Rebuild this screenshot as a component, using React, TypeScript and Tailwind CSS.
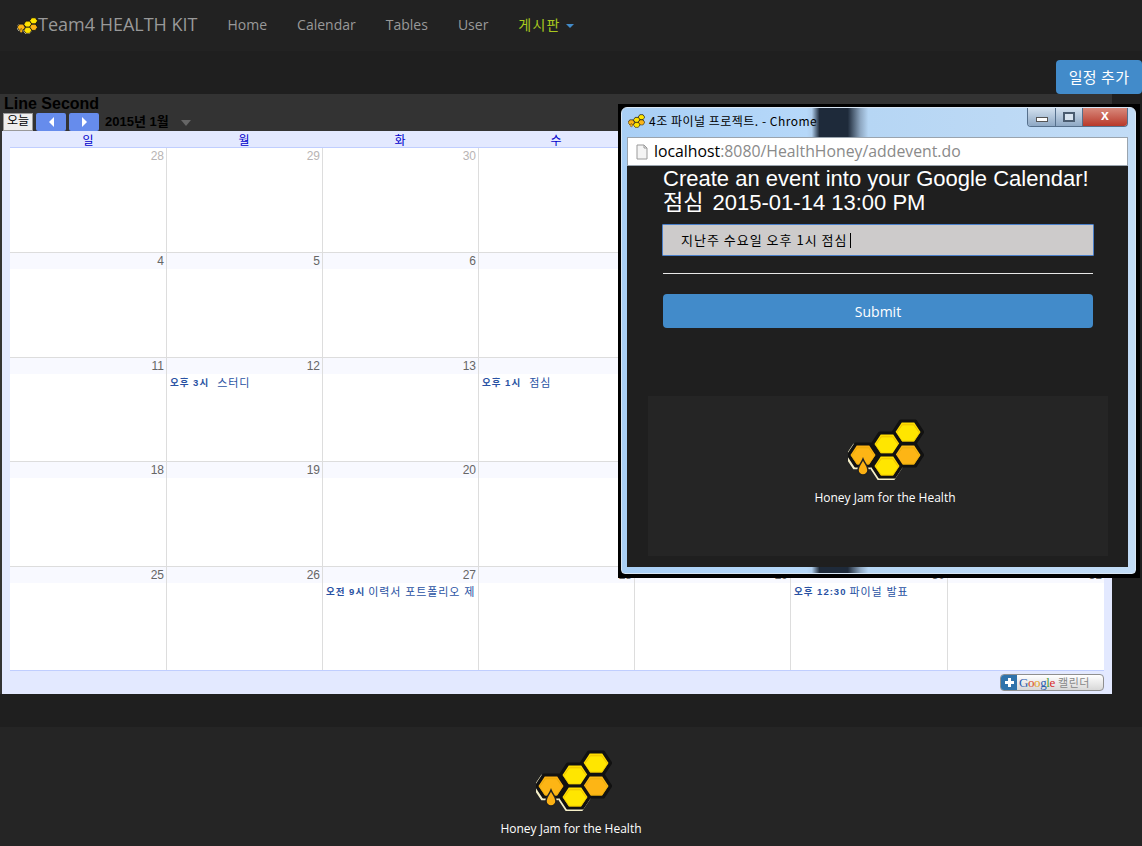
import React from 'react';

const open = { fontFamily: '"Open Sans", "Noto Sans CJK KR", sans-serif' };
const arial = { fontFamily: '"Liberation Sans", "Noto Sans CJK KR", Arial, sans-serif' };
const korean = { fontFamily: '"Noto Sans CJK KR", "Liberation Sans", sans-serif' };

// Honeycomb logo, cell centers measured from the reference
const cells = [
  { x: 60, y: 14, fill: '#ffdd00' },
  { x: 39, y: 26, fill: '#ffdd00' },
  { x: 60, y: 37, fill: '#fbb817' },
  { x: 15, y: 37, fill: '#fbb013' },
  { x: 39, y: 48, fill: '#ffdd00' },
];

const hex = (cx: number, cy: number, w = 14.5, h = 11) =>
  `${cx - w},${cy} ${cx - w / 2},${cy - h} ${cx + w / 2},${cy - h} ${cx + w},${cy} ${cx + w / 2},${cy + h} ${cx - w / 2},${cy + h}`;

const HoneyLogo = ({ className }: { className?: string }) => (
  <svg viewBox="0 0 76 62" className={className}>
    <polygon points={hex(13.5, 38.5)} fill="#f5efc8" stroke="#f5efc8" strokeWidth="3.5" />
    <polygon points={hex(38, 49.5)} fill="#f5efc8" stroke="#f5efc8" strokeWidth="3.5" />
    {cells.map((c) => (
      <g key={`${c.x}-${c.y}`}>
        <polygon points={hex(c.x, c.y)} fill={c.fill} stroke="#111" strokeWidth="3.2" strokeLinejoin="round" />
        <polygon points={hex(c.x, c.y + 1, 11.5, 8.2)} fill={c.fill === '#ffdd00' ? '#ffe600' : '#fdb515'} stroke="#d9a400" strokeWidth="0.5" />
      </g>
    ))}
    <path d="M15 41 C17 46 20 48 20 52 A5 5 0 0 1 10 52 C10 48 13 46 15 41 Z" fill="#fbb013" stroke="#222" strokeWidth="1.5" />
  </svg>
);

const NavLink = ({ children }: { children: React.ReactNode }) => (
  <span className="text-[14px] text-[#999999]">{children}</span>
);

type CalEvent = { time: string; title: string; wide?: boolean };

// n is null for cells whose number sits behind the popup window
type Day = { n: number | null; muted?: boolean; event?: CalEvent };

const covered: Day[] = [{ n: null }, { n: null }, { n: null }, { n: null }];
const coveredMuted: Day[] = [{ n: null, muted: true }, { n: null, muted: true }, { n: null, muted: true }, { n: null, muted: true }];

const weeks: Day[][] = [
  [{ n: 28, muted: true }, { n: 29, muted: true }, { n: 30, muted: true }, ...coveredMuted],
  [{ n: 4 }, { n: 5 }, { n: 6 }, ...covered],
  [
    { n: 11 },
    { n: 12, event: { time: '오후 3시', title: '스터디', wide: true } },
    { n: 13 },
    { n: null, event: { time: '오후 1시', title: '점심', wide: true } },
    { n: null },
    { n: null },
    { n: null },
  ],
  [{ n: 18 }, { n: 19 }, { n: 20 }, ...covered],
  [
    { n: 25 },
    { n: 26 },
    { n: 27, event: { time: '오전 9시', title: '이력서 포트폴리오 제' } },
    { n: 28 },
    { n: 29 },
    { n: 30, event: { time: '오후 12:30', title: '파이널 발표' } },
    { n: 31 },
  ],
];

const Calendar = () => (
  <div className="w-[1112px] h-[600px] flex flex-col bg-[#333333]" style={arial}>
    <div className="h-[37px] pl-[3px] flex flex-col">
      <div className="h-[18px] pl-px pt-px text-[16px] leading-[18px] font-bold text-black">Line Second</div>
      <div className="flex items-center h-[18px] mt-px">
        <div className="w-[30px] h-[18px] bg-[#eeeeee] border border-[#999999] text-[12px] leading-[15px] text-black text-center">오늘</div>
        <div className="w-[30px] h-[18px] ml-[3px] bg-[#668cec] rounded-[2px] flex items-center justify-center">
          <div className="w-0 h-0 border-y-[5px] border-y-transparent border-r-[5px] border-r-white" />
        </div>
        <div className="w-[30px] h-[18px] ml-[3px] bg-[#668cec] rounded-[2px] flex items-center justify-center">
          <div className="w-0 h-0 border-y-[5px] border-y-transparent border-l-[5px] border-l-white" />
        </div>
        <div className="ml-[6px] text-[13px] font-bold text-black">2015년 1월</div>
        <div className="ml-[12px] mt-[2px] w-0 h-0 border-x-[5px] border-x-transparent border-t-[6px] border-t-[#666666]" />
      </div>
    </div>
    <div className="ml-[2px] flex-1 bg-[#e3e9ff] px-[8px] flex flex-col">
      <div className="grid grid-cols-[156px_156px_156px_156px_156px_157px_157px] h-[17px] border-b border-[#c0ceff]">
        {['일', '월', '화', '수'].map((d) => (
          <div key={d} className="text-center text-[12px] leading-[20px] text-[#0000cc]">{d}</div>
        ))}
      </div>
      <div className="h-[522px] grid grid-rows-[104px_105px_104px_105px_104px] bg-white">
        {weeks.map((week, i) => (
          <div key={i} className="grid grid-cols-[156px_156px_156px_156px_156px_157px_157px] border-t border-[#dddddd] first:border-t-0">
            {week.map((day, j) => (
              <div key={j} className="border-l border-[#dddddd] first:border-l-0 min-w-0 overflow-hidden">
                <div className={`h-[16px] pr-[2px] text-right text-[12px] leading-[16px] ${day.muted ? 'text-[#b8b4b4]' : 'text-[#666666] bg-[#f8f9ff]'}`}>{day.n}</div>
                {day.event && (
                  <div className="pl-[3px] mt-[1px] flex text-[11px] leading-[16px] text-[#2952a3] whitespace-nowrap">
                    <span className={`font-bold text-[9.5px] tracking-[1px] ${day.event.wide ? 'mr-[8px]' : 'mr-[3px]'}`}>{day.event.time}</span>
                    <span className="tracking-[0.9px]">{day.event.title}</span>
                  </div>
                )}
              </div>
            ))}
          </div>
        ))}
      </div>
      <div className="flex-1 border-t border-[#c0ceff] flex justify-end items-center">
        <div className="w-[104px] h-[17px] rounded-[4px] border border-[#8f8f8f] bg-[linear-gradient(180deg,#ffffff,#d8d8d8)] flex items-center overflow-hidden">
          <div className="w-[16px] h-full bg-[#2f73ab] flex items-center justify-center">
            <div className="relative w-[9px] h-[9px]">
              <div className="absolute left-0 top-[3px] w-[9px] h-[3px] bg-white" />
              <div className="absolute left-[3px] top-0 w-[3px] h-[9px] bg-white" />
            </div>
          </div>
          <span className="ml-[2px] text-[13px] leading-none tracking-[-0.4px]" style={{ fontFamily: '"Liberation Serif", serif' }}>
            <span className="text-[#2a5db0]">G</span><span className="text-[#d8482c]">o</span><span className="text-[#e5a020]">o</span><span className="text-[#2a5db0]">g</span><span className="text-[#4a9a3a]">l</span><span className="text-[#d8282c]">e</span>
          </span>
          <span className="ml-[3px] text-[11px] leading-none tracking-[0.6px] text-[#888888]" style={korean}>캘린더</span>
        </div>
      </div>
    </div>
  </div>
);

const PopupWindow = () => (
  <div className="absolute left-[618px] top-[104px] w-[522px] h-[474px] bg-black pl-[3px] pt-[3px] pr-[4px] pb-[4px] flex flex-col">
    <div className="flex-1 rounded-t-[6px] rounded-b-[4px] border border-[#d8e6f4] bg-[linear-gradient(90deg,#a9cff5_0%,#b6d8f9_36%,#b0cfee_37%,#1e2a3a_38.5%,#1e2a3a_44%,#8fa8c2_46.5%,#b6d6f4_48%,#c2dcf6_100%)] flex flex-col pl-[5px] pr-[7px] pb-[6px] relative">
      <div className="h-[29px] pb-[3px] flex items-center pl-[1px]">
        <HoneyLogo className="w-[17px] h-[14px]" />
        <span className="ml-[4px] text-[12px] tracking-[0.5px] text-black" style={korean}>4조 파이널 프로젝트. - Chrome</span>
      </div>
      {/* window buttons */}
      <div className="absolute right-[7px] top-0 h-[19px] w-[101px] flex border border-t-0 border-[#56708c] rounded-b-[4px] overflow-hidden">
        <div className="w-[28px] bg-[linear-gradient(180deg,#d2e0ee,#8ea8c4)] flex items-end justify-center pb-[4px] border-r border-[#56708c]">
          <div className="w-[12px] h-[5px] bg-white border border-[#555555]" />
        </div>
        <div className="w-[27px] bg-[linear-gradient(180deg,#d2e0ee,#8ea8c4)] flex items-center justify-center border-r border-[#56708c]">
          <div className="w-[12px] h-[10px] bg-[#d8e4f0] border-2 border-[#4a5c70]" />
        </div>
        <div className="flex-1 bg-[linear-gradient(180deg,#d88a7c,#b8392a)] text-white text-[14px] leading-[15px] font-bold text-center" style={arial}>x</div>
      </div>
      <div className="h-[29px] bg-white border border-[#9aa4ae] flex items-center pl-[8px]">
        <svg width="12" height="16" viewBox="0 0 12 16" className="shrink-0">
          <path d="M1 1 H8 L11 4 V15 H1 Z" fill="#f4f4f4" stroke="#9a9a9a" />
          <path d="M8 1 V4 H11" fill="none" stroke="#9a9a9a" />
        </svg>
        <span className="ml-[6px] text-[15.8px] leading-none" style={open}>
          <span className="text-black">localhost</span><span className="text-[#8a8a8a]">:8080/HealthHoney/addevent.do</span>
        </span>
      </div>
      <div className="flex-1 bg-[#1f1f1f] flex flex-col pl-[21px] pr-[20px]">
        <div className="pl-[15px] text-[22px] leading-[24px] text-white pt-px whitespace-nowrap" style={arial}>
          <div>Create an event into your Google Calendar!</div>
          <div><span className="mr-[3px]">점심</span> 2015-01-14 13:00 PM</div>
        </div>
        <div className="ml-[14px] mr-[14px] mt-[9px] h-[32px] bg-[#cdcbcb] border border-[#4a7fc9] flex items-center pl-[18px] rounded-[1px]">
          <span className="text-[13px] tracking-[1px] text-black" style={korean}>지난주 수요일 오후 1시 점심</span>
          <span className="ml-[3px] w-px h-[15px] bg-black" />
        </div>
        <div className="mx-[15px] mt-[17px] h-px bg-[#e8e8e8]" />
        <button className="mx-[15px] mt-[20px] h-[34px] shrink-0 rounded-[4px] bg-[#428bca] text-white text-[14px]" style={open}>Submit</button>
        <div className="mt-[68px] h-[160px] bg-[#252525] flex flex-col items-center pt-[22px]">
          <div className="ml-[14px] flex flex-col items-center">
            <HoneyLogo className="w-[76px] h-[62px] ml-[2px]" />
            <div className="mt-[9px] text-[12px] text-white" style={open}>Honey Jam for the Health</div>
          </div>
        </div>
      </div>
    </div>
  </div>
);

export default function App() {
  return (
    <div className="relative w-[1142px] h-[846px] overflow-hidden bg-[#1f1f1f] flex flex-col" style={open}>
      <div className="h-[51px] pb-[2px] shrink-0 bg-[#222222] flex items-center">
        <div className="ml-[17px] flex items-center">
          <HoneyLogo className="w-[21px] h-[17px] mt-[2px]" />
          <span className="text-[18px] text-[#999999]">Team4 HEALTH KIT</span>
        </div>
        <div className="ml-[30px] flex items-center gap-[30px]">
          <NavLink>Home</NavLink>
          <NavLink>Calendar</NavLink>
          <NavLink>Tables</NavLink>
          <NavLink>User</NavLink>
          <span className="flex items-center text-[14px] tracking-[1.2px] text-[#a8c81e]">
            게시판
            <span className="ml-[5px] mt-[2px] w-0 h-0 border-x-[4px] border-x-transparent border-t-[4px] border-t-[#428bca]" />
          </span>
        </div>
      </div>
      <div className="h-[43px] shrink-0 flex justify-end items-end">
        <button className="w-[86px] h-[34px] rounded-[4px] bg-[#428bca] text-white text-[15px] tracking-[0.3px]">일정 추가</button>
      </div>
      <Calendar />
      <div className="mt-[33px] flex-1 bg-[#252525] flex flex-col items-center pt-[22px]">
        <HoneyLogo className="w-[76px] h-[62px] ml-[6px]" />
        <div className="mt-[9px] text-[12px] text-white">Honey Jam for the Health</div>
      </div>
      <PopupWindow />
    </div>
  );
}
